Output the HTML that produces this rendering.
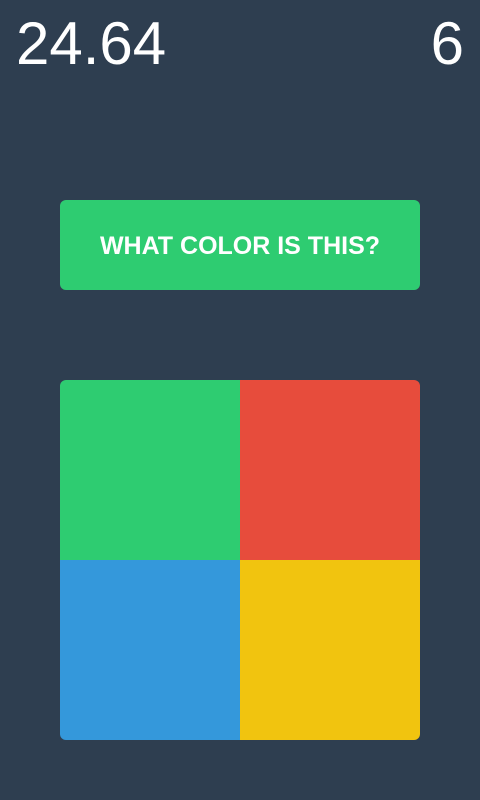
<!DOCTYPE html>
<html><head><style>
html,body{margin:0;padding:0;width:480px;height:800px;background:#2e3e50;overflow:hidden;font-family:"Liberation Sans",sans-serif}
.t{position:absolute;top:8px;color:#fff;font-size:60px;line-height:72px}
.btn{position:absolute;left:60px;top:200px;width:360px;height:90px;background:#2ecc71;border-radius:6px;color:#fff;font-weight:bold;font-size:25px;text-align:center;line-height:92px}
.g{position:absolute;left:60px;top:380px;width:360px;height:360px;border-radius:6px;overflow:hidden}
.g div{position:absolute;width:180px;height:180px}
</style></head><body>
<div class="t" style="left:16px">24.64</div>
<div class="t" style="right:16px">6</div>
<div class="btn">WHAT COLOR IS THIS?</div>
<div class="g">
<div style="left:0;top:0;background:#2ecc71"></div>
<div style="left:180px;top:0;background:#e74c3c"></div>
<div style="left:0;top:180px;background:#3498db"></div>
<div style="left:180px;top:180px;background:#f1c40f"></div>
</div>
</body></html>
